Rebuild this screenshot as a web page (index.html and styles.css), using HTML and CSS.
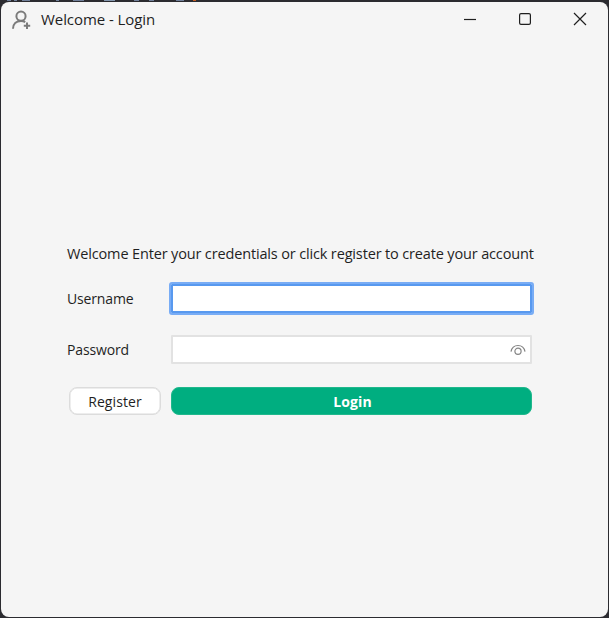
FILE: index.html
```
<!DOCTYPE html>
<html lang="en">
<head>
<meta charset="utf-8">
<title>Welcome - Login</title>
<link rel="stylesheet" href="styles.css">
</head>
<body>
<div class="window">
  <header class="titlebar">
    <svg class="app-icon" width="20" height="20" viewBox="0 0 20 20"><circle cx="10" cy="6.2" r="4.6"/><path d="M2 18.8C2 14 5.300 10.900 10 10.900C11.600 10.900 13 11.300 14.200 12.100M16 12.600v6.400M12.800 15.800h6.400"/></svg>
    <span class="title">Welcome - Login</span>
    <nav class="controls">
      <svg width="14" height="14" viewBox="0 0 14 14"><path d="M1 7.5h12"/></svg>
      <svg width="14" height="14" viewBox="0 0 14 14"><rect x="1.6" y="1.6" width="10.8" height="10.8" rx="1.4"/></svg>
      <svg width="14" height="14" viewBox="0 0 14 14"><path d="M1 1l12 12M13 1L1 13"/></svg>
    </nav>
  </header>
  <main class="form">
    <p class="intro">Welcome Enter your credentials or click register to create your account</p>
    <label class="label-user" for="user">Username</label>
    <input class="field focused" id="user" type="text">
    <label class="label-pass" for="pass">Password</label>
    <div class="field password">
      <input class="bare" id="pass" type="password">
      <svg class="eye" width="16" height="12" viewBox="0 0 16 12"><path d="M1 7.6C1.7 3.8 4.4 1.5 8 1.5s6.300 2.300 7 6.100"/><circle cx="8" cy="7.300" r="3.100"/></svg>
    </div>
    <button class="button register" type="button">Register</button>
    <button class="button login" type="button">Login</button>
  </main>
</div>
</body>
</html>
```
FILE: styles.css
```
* { box-sizing: border-box; }
body {
  margin: 0;
  height: 618px;
  padding: 2px 1px 1px;
  background:
    linear-gradient(90deg, transparent 7px, #71809a 7px 11px, transparent 11px 14px, #71809a 14px 17px, transparent 17px 22px, #71809a 22px 30px, transparent 30px 56px, #71809a 56px 59px, transparent 59px 73px, #71809a 73px 84px, transparent 84px 104px, #8497ae 104px 115px, transparent 115px 134px, #71809a 134px 139px, transparent 139px 149px, #71809a 149px 154px, transparent 154px 176px, #71809a 176px 184px, transparent 184px 193px, #c45d22 193px 196px, transparent 196px) 0 0 / 100% 1px no-repeat,
    #2b2b30;
  color: #1f1f1f;
  font: 14px/20px "Open Sans", sans-serif;
  overflow: hidden;
}
.window {
  height: 615px;
  border-radius: 8px;
  background: #f5f5f5;
}
.titlebar {
  display: flex;
  align-items: center;
  height: 34px;
  padding: 0 21px 0 10px;
}
.app-icon { margin-top: 1px; fill: none; stroke: #7b7b7b; stroke-width: 2; }
.title { margin: 0 0 0 10px; font-size: 15px; letter-spacing: -0.07px; }
.controls { display: flex; gap: 41px; margin-left: auto; }
.controls svg { fill: none; stroke: #1f1f1f; stroke-width: 1.2; }
.form {
  display: grid;
  grid-template-columns: 102px 365px;
  grid-template-rows: 38px 53px 52px 28px;
  align-items: start;
  padding: 208px 0 0 66px;
}
.intro {
  grid-column: 1 / 3;
  margin: 0;
  white-space: nowrap;
  font-size: 14.5px;
  letter-spacing: -0.15px;
}
.label-user { line-height: 33px; letter-spacing: -0.15px; }
.label-pass { line-height: 29px; letter-spacing: -0.15px; }
.field { border: 2px solid #e2e2e2; background: #fff; outline: none; }
.focused {
  width: 365px;
  height: 33px;
  border: 2px solid #78acf5;
  border-radius: 3px;
  box-shadow: inset 0 0 0 2px #5899ef;
}
.password {
  display: flex;
  align-items: center;
  width: 361px;
  height: 29px;
  margin-left: 2px;
  padding-right: 4px;
  border-radius: 1px;
}
.bare { flex: 1; min-width: 0; height: 20px; padding: 0 6px; border: 0; outline: 0; background: none; }
.eye { fill: none; stroke: #858585; stroke-width: 1.2; }
.button { height: 28px; margin: 0 0 0 2px; padding: 1px 0 0; border-radius: 8px; font: inherit; letter-spacing: 0.1px; }
.register { width: 92px; border: 1px solid #dcdcdc; box-shadow: inset 0 0 0 0.5px #dcdcdc; background: #fff; color: #1f1f1f; }
.login { width: 361px; padding-left: 2px; border: 1px solid #20b88c; background: #00ae80; color: #fff; font-weight: 700; }
```
